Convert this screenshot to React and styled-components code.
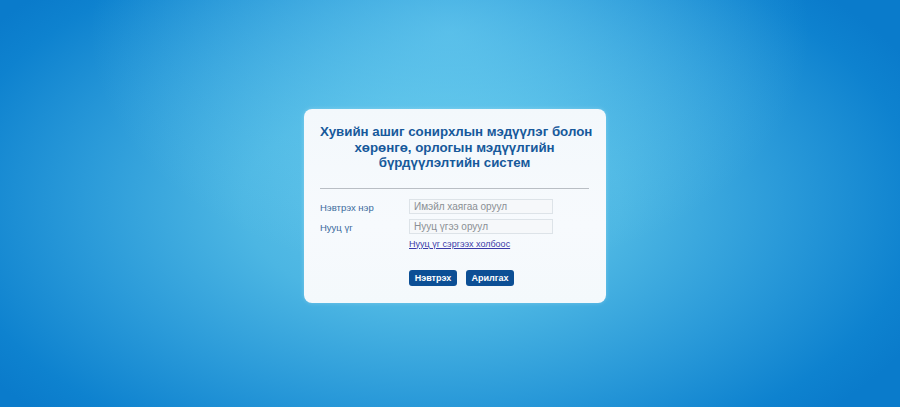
import React from 'react';
import styled, { createGlobalStyle } from 'styled-components';

const Global = createGlobalStyle`
    html, body {
        margin: 0;
        padding: 0;
    }
    body {
        font-family: "Liberation Sans", Arial, sans-serif;
    }
`;

const Page = styled.div`
    min-height: 407px;
    display: flex;
    justify-content: center;
    align-items: center;
    padding: 5px 0 0 10px;
    box-sizing: border-box;
    background:
        radial-gradient(ellipse 40% 60% at 50% 8%, rgba(120,215,245,0.55) 0%, rgba(120,215,245,0) 100%),
        radial-gradient(ellipse 60% 75% at 48% 50%, #64c6ea 0%, #4cb6e3 35%, #2a9ad9 65%, #0e82cf 90%, #0a7bcb 100%);
`;

const Card = styled.div`
    width: 302px;
    height: 194px;
    box-sizing: border-box;
    padding: 15px 17px 16px 16px;
    border-radius: 8px;
    background: linear-gradient(180deg, #f3f8fc 0%, #f7fafd 60%, #f4f9fc 100%);
    box-shadow: 0 0 4px rgba(255,255,255,0.25);
`;

const Title = styled.h1`
    margin: 0;
    font-size: 13.3px;
    line-height: 15.5px;
    font-weight: bold;
    color: #17599b;
    text-align: center;
    white-space: nowrap;
`;

const Divider = styled.hr`
    margin: 17px 0 10px 0;
    border: 0;
    border-top: 1px solid #b9bec4;
`;

const Row = styled.div`
    display: flex;
    align-items: center;
    margin-bottom: 5px;
`;

const Label = styled.label`
    width: 89px;
    font-size: 9.5px;
    color: #3a6a9c;
    padding-top: 2px;
`;

const Input = styled.input`
    width: 144px;
    height: 15px;
    box-sizing: border-box;
    border: 1px solid #dde3e8;
    background: #f6f8fa;
    padding: 0 4px;
    font-family: "Liberation Sans", Arial, sans-serif;
    font-size: 10px;
    outline: none;
    &::placeholder {
        color: #8a8f94;
    }
`;

const LinkLine = styled.div`
    padding-left: 89px;
    font-size: 9px;
    line-height: 11px;
`;

const Link = styled.a`
    color: #3a3aa8;
    text-decoration: underline;
`;

const Buttons = styled.div`
    display: flex;
    gap: 9px;
    margin: 20px 0 0 89px;
`;

const Button = styled.button`
    width: 48px;
    height: 16px;
    border: 0;
    border-radius: 3px;
    background: #0c4f95;
    color: #fff;
    font-family: "Liberation Sans", Arial, sans-serif;
    font-size: 9px;
    font-weight: bold;
    padding: 0;
`;

function App() {
    return (
        <Page>
            <Global />
            <Card>
                <Title>
                    Хувийн ашиг сонирхлын мэдүүлэг болон<br />
                    хөрөнгө, орлогын мэдүүлгийн<br />
                    бүрдүүлэлтийн систем
                </Title>
                <Divider />
                <Row>
                    <Label>Нэвтрэх нэр</Label>
                    <Input placeholder="Имэйл хаягаа оруул" />
                </Row>
                <Row>
                    <Label>Нууц үг</Label>
                    <Input type="password" placeholder="Нууц үгээ оруул" />
                </Row>
                <LinkLine>
                    <Link href="#">Нууц үг сэргээх холбоос</Link>
                </LinkLine>
                <Buttons>
                    <Button>Нэвтрэх</Button>
                    <Button>Арилгах</Button>
                </Buttons>
            </Card>
        </Page>
    );
}

export default App;
